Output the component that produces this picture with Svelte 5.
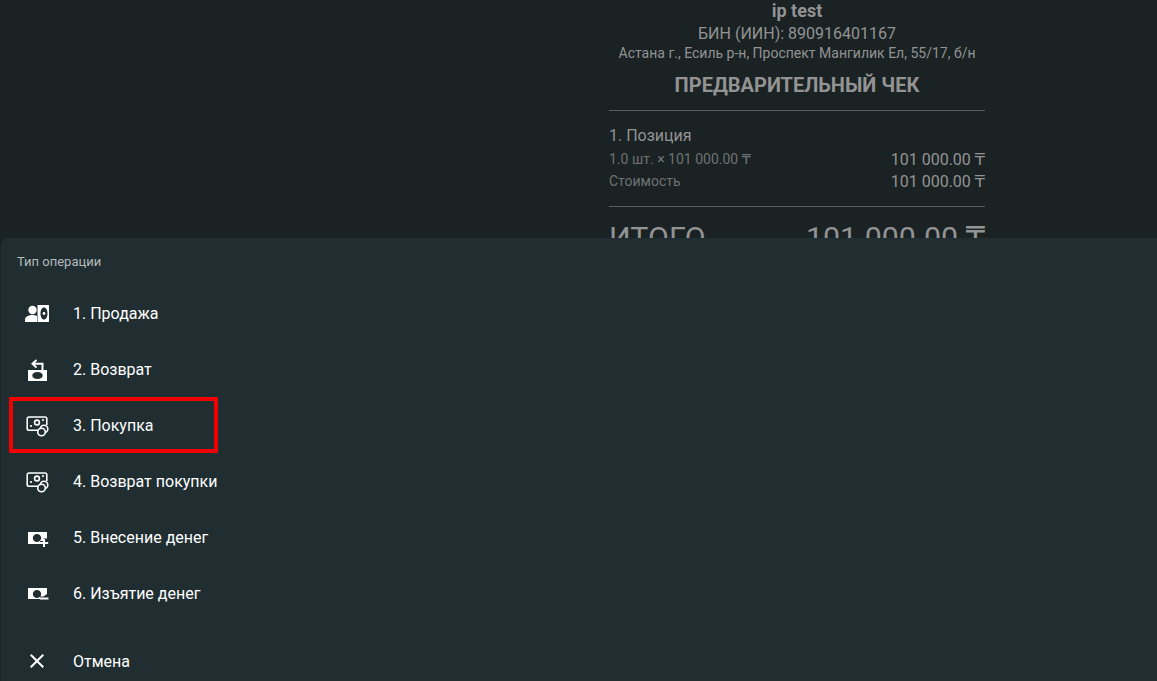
<script>
  const rows = [
    { id: 'sale', label: '1. Продажа' },
    { id: 'refund', label: '2. Возврат' },
    { id: 'buy', label: '3. Покупка', marked: true },
    { id: 'buy', label: '4. Возврат покупки' },
    { id: 'add', label: '5. Внесение денег' },
    { id: 'take', label: '6. Изъятие денег' }
  ]
</script>

{#snippet icon(id)}
  <svg class="icon" viewBox="0 0 24 24" width="24" height="24" fill="#fff">
    {#if id == 'sale'}
      <circle cx="7.500" cy="9" r="4.200"/>
      <path d="M0 21v-2.500c0-3 4-4.500 7.500-4.500 1.600 0 3.200.3 4.500.9V21z"/>
      <path fill-rule="evenodd" d="M12.500 4H25v17H12.500zM19 6.500c-2.100 0-3.500 2.600-3.500 6s1.400 6 3.500 6 3.500-2.600 3.500-6-1.400-6-3.500-6z"/>
      <circle cx="19" cy="12.500" r="1.400"/>
    {:else if id == 'refund'}
      <path fill="none" stroke="#fff" stroke-width="2" d="M17.500 13.500V6.800H8.500M11.500 3 7.500 6.800l4 3.800"/>
      <path fill-rule="evenodd" d="M3 13h19v11H3zM12.500 15c-3 0-5.200 1.400-5.200 3.500s2.200 3.500 5.200 3.500 5.200-1.400 5.200-3.500-2.200-3.500-5.200-3.500z"/>
    {:else if id == 'buy'}
      <g fill="none" stroke="#fff" stroke-width="1.600">
        <path d="M13 17.200H4a1.800 1.800 0 0 1-1.800-1.800V5.800A1.800 1.800 0 0 1 4 4h16a1.800 1.800 0 0 1 1.800 1.800V12"/>
        <circle cx="12" cy="9.500" r="2.400"/>
        <circle cx="19" cy="16" r="3.800" fill="#202e32"/>
        <circle cx="16.500" cy="19" r="3.800" fill="#202e32"/>
      </g>
      <circle cx="6" cy="13" r="1.100"/>
      <circle cx="18" cy="7" r="1.100"/>
    {:else if id == 'add'}
      <path fill-rule="evenodd" d="M3 7h19v6.500h-3.500V16H15v3H3zM12 9c-2.400 0-4.200 1.700-4.200 4s1.800 4 4.200 4 4.200-1.700 4.200-4-1.800-4-4.200-4z"/>
      <path d="M18 14h2v3h3.200v2H20v3h-2v-3h-3.200v-2H18z"/>
    {:else if id == 'take'}
      <path fill-rule="evenodd" d="M3 7h19v6l-3.500 2.500H15V18H3zM12 9c-2.400 0-4.200 1.700-4.200 4s1.800 4 4.200 4 4.200-1.700 4.200-4-1.800-4-4.200-4z"/>
      <path d="M15 16.500h8.500v2H15z"/>
    {/if}
  </svg>
{/snippet}

<div class="page">
  <section class="receipt">
    <h1>ip test</h1>
    <div class="bin">БИН (ИИН): 890916401167</div>
    <div class="address">Астана г., Есиль р-н, Проспект Мангилик Ел, 55/17, б/н</div>
    <h2>ПРЕДВАРИТЕЛЬНЫЙ ЧЕК</h2>
    <hr />
    <div class="position">1. Позиция</div>
    <div class="line first">
      <span class="small">1.0 шт. × 101 000.00 <span class="tenge">₸</span></span>
      <span>101 000.00 <span class="tenge">₸</span></span>
    </div>
    <div class="line">
      <span class="small">Стоимость</span>
      <span>101 000.00 <span class="tenge">₸</span></span>
    </div>
    <hr class="second" />
    <div class="total">
      <span>ИТОГО</span>
      <span>101 000.00 <span class="tenge">₸</span></span>
    </div>
  </section>

  <section class="sheet">
    <div class="caption">Тип операции</div>
    {#each rows as row}
      <div class="row">
        {@render icon(row.id)}
        <span>{row.label}</span>
        {#if row.marked}
          <div class="mark"></div>
        {/if}
      </div>
    {/each}
    <div class="row cancel">
      <svg class="icon" viewBox="0 0 24 24" width="24" height="24">
        <path d="M19 6.410 17.590 5 12 10.590 6.410 5 5 6.410 10.590 12 5 17.590 6.410 19 12 13.410 17.590 19 19 17.590 13.410 12z" fill="#fff"/>
      </svg>
      <span>Отмена</span>
    </div>
  </section>
</div>

<style>
  :global(body) {
    margin: 0;
    background: #1a2224;
    font-family: Roboto, sans-serif;
  }

  .page {
    position: relative;
    height: 681px;
    overflow: hidden;
    background: #1a2224;
  }

  .receipt {
    width: 376px;
    margin-left: 609px;
    color: #939393;
    text-align: center;
  }

  h1 {
    margin: 0 0 2px;
    font-size: 18px;
    line-height: 21px;
    font-weight: 700;
  }

  .bin {
    font-size: 16px;
    line-height: 22px;
  }

  .address {
    font-size: 14px;
    line-height: 16px;
  }

  h2 {
    margin: 9px 0 0;
    font-size: 20px;
    line-height: 30px;
    font-weight: 700;
  }

  hr {
    margin: 10px 0 0;
    border: 0;
    border-top: 1px solid #5b5f61;
  }

  .position {
    margin-top: 15px;
    font-size: 16px;
    line-height: 20px;
    text-align: left;
  }

  .line {
    display: flex;
    justify-content: space-between;
    align-items: center;
    height: 22px;
    font-size: 16px;
    text-align: left;
  }

  .first {
    margin-top: 2px;
  }

  .small {
    font-size: 14px;
    color: #6f7273;
  }

  .tenge {
    font-family: "DejaVu Sans", sans-serif;
  }

  .second {
    margin-top: 14px;
  }

  .total {
    display: flex;
    justify-content: space-between;
    margin-top: 12px;
    font-size: 30.4px;
    line-height: 38px;
  }

  .sheet {
    position: absolute;
    top: 238px;
    left: 1px;
    right: 0;
    bottom: 0;
    background: #202e32;
    border-radius: 8px 0 0 0;
    color: #fff;
  }

  .caption {
    height: 47px;
    padding-left: 16px;
    font-size: 13px;
    line-height: 48px;
    color: #b4b9bb;
  }

  .row {
    position: relative;
    display: flex;
    align-items: center;
    gap: 24px;
    height: 56px;
    padding-left: 24px;
    font-size: 16px;
  }

  .icon {
    flex: none;
  }

  .mark {
    position: absolute;
    top: 0;
    left: 8px;
    width: 209px;
    height: 56px;
    box-sizing: border-box;
    border: 4px solid #f00000;
  }

  .cancel {
    margin-top: 12px;
  }
</style>
